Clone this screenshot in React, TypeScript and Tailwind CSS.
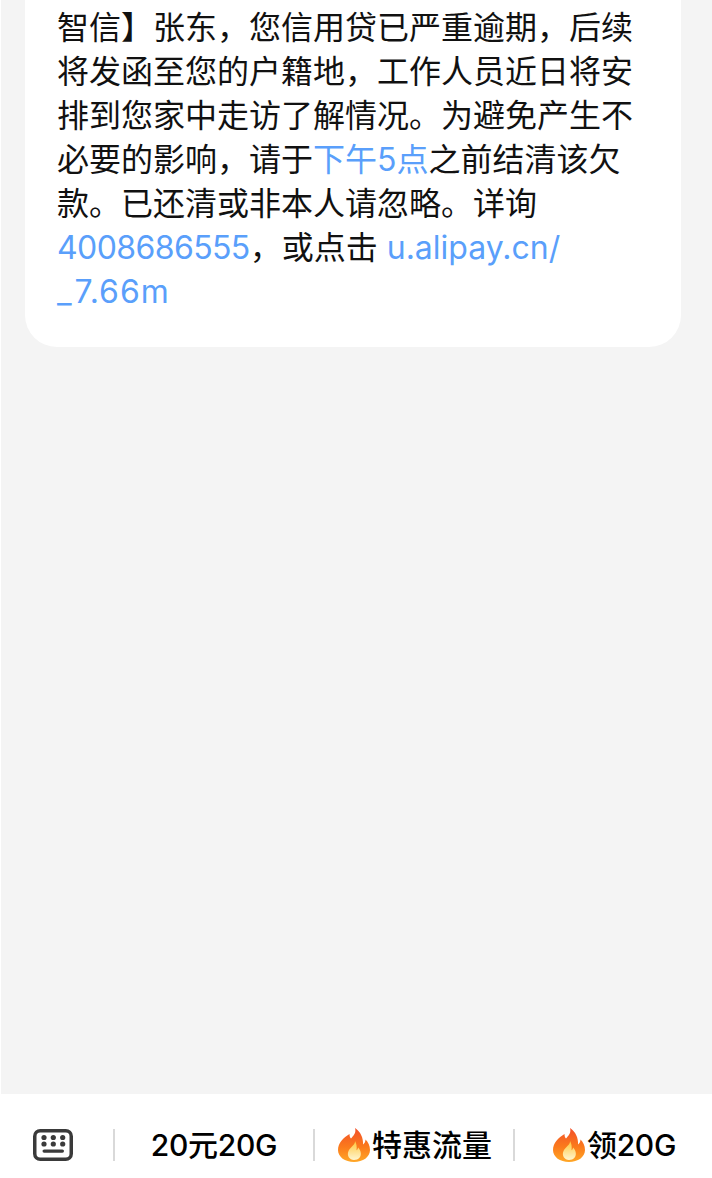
const cjk = "font-['Inter','Noto_Sans_CJK_SC',sans-serif]";

function Flame() {
  return (
    <svg width="32" height="34" viewBox="0 0 32 34" className="mr-[2px] shrink-0">
      <defs>
        <linearGradient id="outer" x1="0" y1="0" x2="0" y2="1">
          <stop offset="0" stopColor="#f2502a" />
          <stop offset="0.55" stopColor="#fb7a1c" />
          <stop offset="1" stopColor="#ffa726" />
        </linearGradient>
        <linearGradient id="inner" x1="0" y1="0" x2="0" y2="1">
          <stop offset="0" stopColor="#ffc53a" />
          <stop offset="1" stopColor="#fff6cf" />
        </linearGradient>
      </defs>
      <path
        fill="url(#outer)"
        d="M17 0c1.500 5-1.500 7.500-4 10.500-1-1-1.500-2.500-1.500-4.500C5.500 9.500 0 15 0 22c0 7 7 12 16 12s16-5 16-12c0-4.500-2-8-4.500-10.500 0 2-1 4-2.500 5C25.500 10 22.500 3.500 17 0z"
      />
      <path
        fill="url(#inner)"
        d="M17 13c.5 3.500-4.500 6-6.500 10C8.500 27.500 11.500 32 16 32s8-3.500 6.500-8.500c-.5-2-1.500-3-2.500-4 0 1.200-.5 2-1.500 2.700C19 19 18.500 15.500 17 13z"
      />
    </svg>
  );
}

function KeyboardIcon() {
  return (
    <svg width="40" height="32" viewBox="0 0 40 32" fill="none">
      <rect x="1.750" y="1.750" width="36.500" height="28.500" rx="5.500" stroke="#3a3a3a" strokeWidth="3.500" />
      {[8.500, 15].map((cy) =>
        [11, 20.300, 29.700].map((cx) => <circle key={`${cx}-${cy}`} cx={cx} cy={cy} r="2.600" fill="#3a3a3a" />)
      )}
      <rect x="9.500" y="20.500" width="21.500" height="3.200" rx="1.600" fill="#3a3a3a" />
    </svg>
  );
}

function Link({ children }: { children: React.ReactNode }) {
  return <span className="text-[#5a9ffb]">{children}</span>;
}

export default function App() {
  return (
    <div className={`flex h-[1178px] w-[712px] flex-col overflow-hidden bg-white ${cjk}`}>
      {/* message area */}
      <div className="ml-px flex-1 bg-[#f4f4f4] pl-6 pr-[31px]">
        <div className="rounded-b-[32px] bg-white pb-[33px] pl-8 pt-[6px] text-[32px] leading-[44px] text-[#111111]">
          智信】张东，您信用贷已严重逾期，后续
          <br />
          将发函至您的户籍地，工作人员近日将安
          <br />
          排到您家中走访了解情况。为避免产生不
          <br />
          必要的影响，请于<Link>下午5点</Link>之前结清该欠
          <br />
          款。已还清或非本人请忽略。详询
          <br />
          <Link>
            <span className="tracking-[-0.6px]">4008686555</span>
          </Link>
          ，或点击 <Link>u.alipay.cn/</Link>
          <br />
          <Link>
            <span className="tracking-[3px]">_</span>
            <span className="tracking-[1px]">7.66m</span>
          </Link>
        </div>
      </div>

      {/* bottom menu */}
      <div className="flex h-[84px] items-start bg-white pt-[35px] text-[30px] font-medium leading-[40px] text-black">
        <div className="flex w-[113px] justify-center pr-[7px]">
          <KeyboardIcon />
        </div>
        <div className="flex h-8 w-[200px] items-center justify-center border-l-2 border-[#d9d9d9] tracking-[-0.3px]">
          20元20G
        </div>
        <div className="flex h-8 w-[200px] items-center justify-center border-l-2 border-[#d9d9d9] pl-[2px]">
          <Flame />
          特惠流量
        </div>
        <div className="flex h-8 w-[199px] items-center justify-center border-l-2 border-[#d9d9d9] pl-[2px] tracking-[-0.3px]">
          <Flame />
          领20G
        </div>
      </div>
    </div>
  );
}
